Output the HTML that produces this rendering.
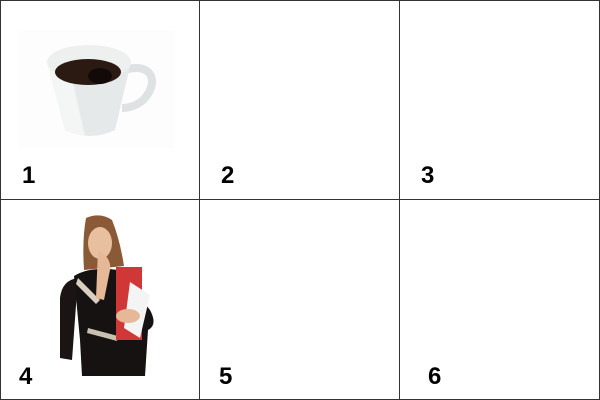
<!DOCTYPE html>
<html><head><style>
html,body{margin:0;padding:0;background:#fff}
body{width:600px;height:400px;position:relative;overflow:hidden;font-family:"Liberation Sans",sans-serif}
.l{position:absolute;background:#333}
.n{position:absolute;font-weight:bold;font-size:24px;color:#000;line-height:1}
</style></head><body>
<div class="l" style="left:0;top:0;width:600px;height:1px"></div>
<div class="l" style="left:0;top:399px;width:600px;height:1px"></div>
<div class="l" style="left:0;top:0;width:1px;height:400px"></div>
<div class="l" style="left:599px;top:0;width:1px;height:400px"></div>
<div class="l" style="left:199px;top:0;width:1px;height:400px"></div>
<div class="l" style="left:399px;top:0;width:1px;height:400px"></div>
<div class="l" style="left:0;top:199px;width:600px;height:1px"></div>

<svg style="position:absolute;left:0;top:0" width="200" height="200">
  <rect x="18" y="30" width="157" height="118" fill="#fdfdfd"/>
  <path d="M125 70 C150 62 160 80 145 98 C138 106 128 108 122 108" fill="none" stroke="#dfe2e2" stroke-width="8"/>
  <path d="M47 62 L65 130 Q90 142 115 130 L131 62 Z" fill="#e6e9e9"/>
  <path d="M47 62 L65 130 Q75 135 85 136 L70 70 Z" fill="#f4f5f5"/>
  <ellipse cx="89" cy="62" rx="42" ry="17" fill="#eef0f0"/>
  <ellipse cx="88" cy="72" rx="33" ry="13" fill="#2a1a12"/>
  <ellipse cx="100" cy="76" rx="12" ry="8" fill="#120a08"/>
</svg>

<svg style="position:absolute;left:0;top:200" width="200" height="200">
  <path d="M86 18 Q100 12 112 20 Q120 40 124 66 L84 70 Q82 40 86 18 Z" fill="#8a5a36"/>
  <ellipse cx="100" cy="43" rx="12" ry="16" fill="#e8c0a0"/>
  <path d="M60 98 Q62 80 78 78 L72 160 L60 158 Z" fill="#1a1414"/>
  <path d="M74 76 Q90 66 118 70 L150 110 Q158 125 148 130 L145 176 L82 176 L80 140 Z" fill="#161212"/>
  <path d="M78 78 L100 100 L96 104 L76 84 Z" fill="#d8d0c0"/>
  <path d="M88 128 L118 136 L117 141 L87 133 Z" fill="#c8c0b0"/>
  <rect x="116" y="67" width="26" height="73" fill="#d03838"/>
  <path d="M130 82 L150 95 L140 138 L124 128 Z" fill="#f4f4f4"/>
  <path d="M98 50 Q112 58 110 70 L104 100 L96 98 Z" fill="#e5b898"/>
  <ellipse cx="128" cy="116" rx="12" ry="7" fill="#e5b898"/>
</svg>

<div class="n" style="left:22px;top:164px">1</div>
<div class="n" style="left:221px;top:164px">2</div>
<div class="n" style="left:421px;top:164px">3</div>
<div class="n" style="left:19px;top:365px">4</div>
<div class="n" style="left:219px;top:365px">5</div>
<div class="n" style="left:428px;top:365px">6</div>
</body></html>
